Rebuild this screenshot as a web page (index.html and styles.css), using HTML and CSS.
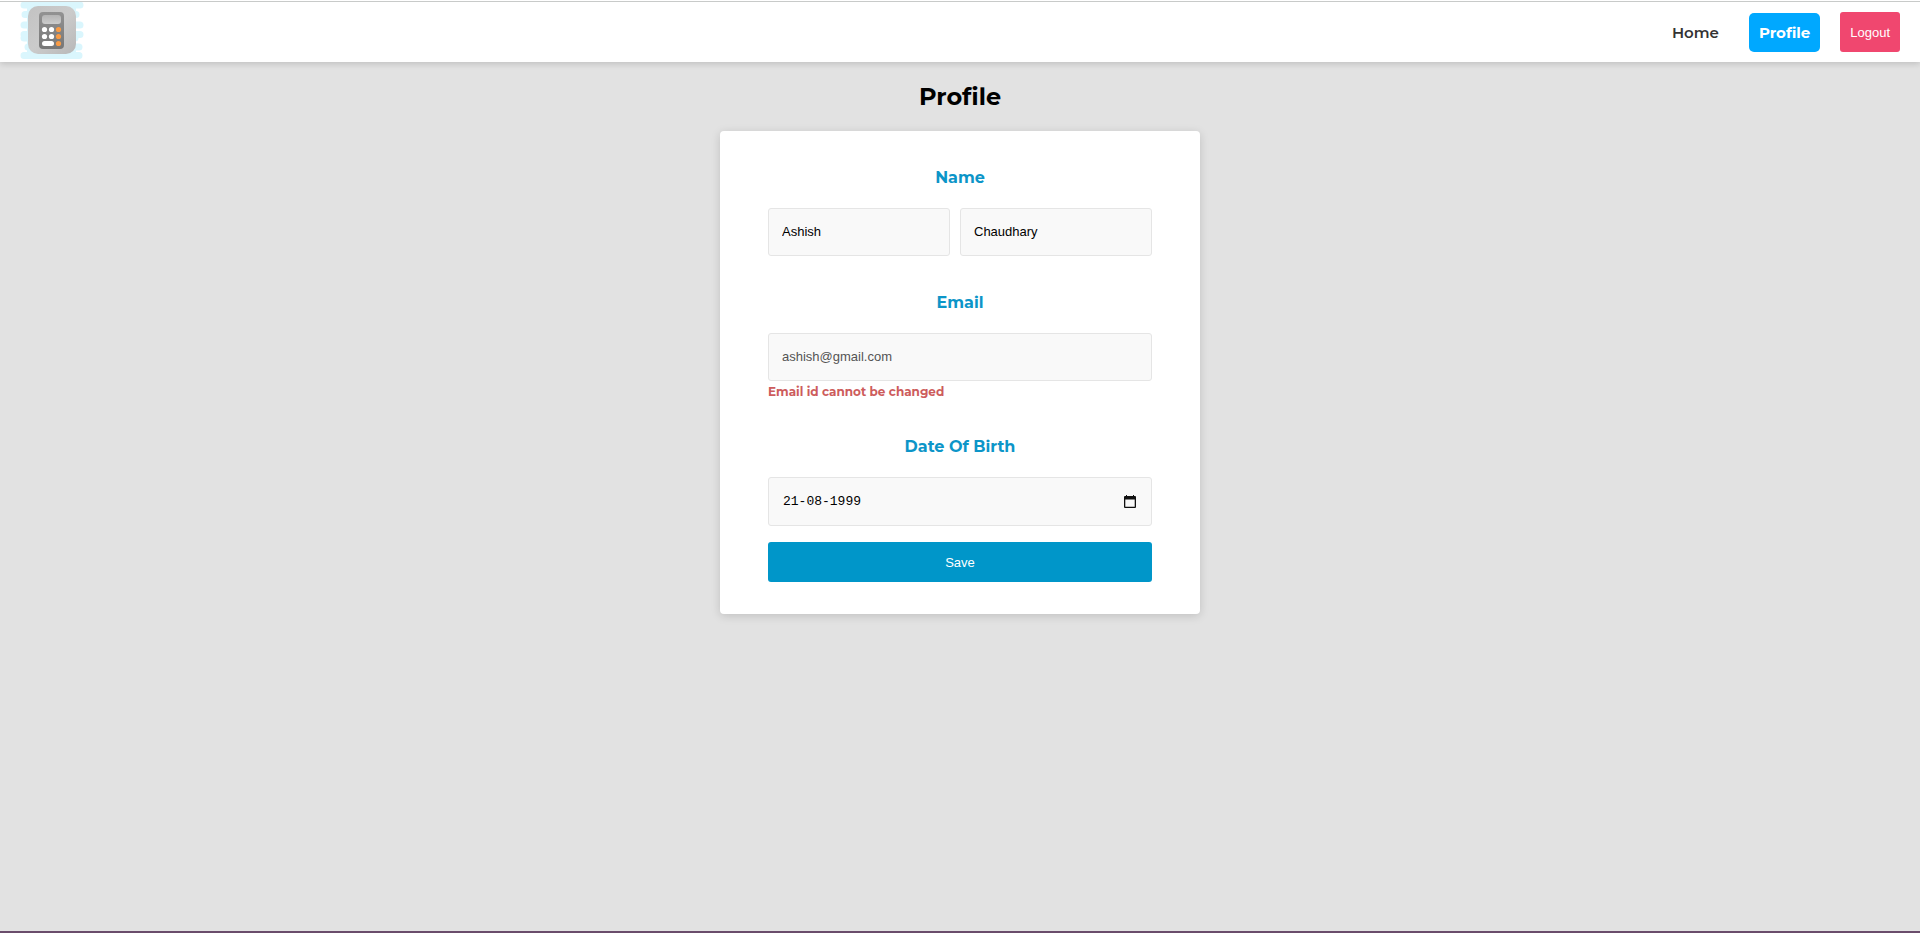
FILE: index.html
```html
<!DOCTYPE html>
<html lang="en">
<head>
<meta charset="utf-8">
<title>Profile</title>
<meta name="viewport" content="width=device-width, initial-scale=1">
<link rel="stylesheet" href="styles.css">
</head>
<body class="page">
<header class="navbar">
  <a class="logo" href="#" aria-label="Calculator home">
    <svg class="logo-icon" viewBox="0 0 64 60" aria-hidden="true">
      <defs>
        <linearGradient id="tile" x1="0" y1="0" x2="1" y2="1"><stop offset="0" stop-color="#c2c2c2"/><stop offset=".5" stop-color="#cbcbcb"/><stop offset="1" stop-color="#b8b8b8"/></linearGradient>
        <linearGradient id="case" x1="0" y1="0" x2="0" y2="1"><stop offset="0" stop-color="#929292"/><stop offset="1" stop-color="#777"/></linearGradient>
        <linearGradient id="screen" x1="0" y1="0" x2="0" y2="1"><stop offset="0" stop-color="#b5b5b5"/><stop offset="1" stop-color="#ccc"/></linearGradient>
      </defs>
      <g stroke="#daf6fd" stroke-width="7" stroke-linecap="round">
        <path d="M4 3H60M5 12.500H56M4 23H60M4 32.500H60M4 36H55M8 45H59M4 53.500H59"/>
      </g>
      <path fill="#daf6fd" d="M7 2h49v52H7z"/>
      <rect x="8" y="4" width="48" height="48" rx="10" fill="url(#tile)"/>
      <rect x="19" y="10" width="25" height="37" rx="4" fill="url(#case)"/>
      <rect x="22" y="13" width="19" height="9" rx="3" fill="url(#screen)"/>
      <g fill="#fff"><circle cx="24.500" cy="27.500" r="2.600"/><circle cx="31.500" cy="27.500" r="2.600"/><circle cx="24.500" cy="34.500" r="2.600"/><circle cx="31.500" cy="34.500" r="2.600"/><rect x="22" y="39" width="12" height="5" rx="2.500"/></g>
      <g fill="#f99b45"><circle cx="38.500" cy="27.500" r="2.600"/><circle cx="38.500" cy="34.500" r="2.600"/><circle cx="38.500" cy="41.500" r="2.600"/></g>
    </svg>
  </a>
  <nav class="nav-links">
    <a class="nav-link" href="#">Home</a>
    <a class="nav-link nav-link-active" href="#" aria-current="page">Profile</a>
    <button class="logout" type="button">Logout</button>
  </nav>
</header>
<main class="content">
  <h1 class="title">Profile</h1>
  <form class="card">
    <label class="label" for="first-name">Name</label>
    <div class="name-row">
      <input class="field" id="first-name" type="text" value="Ashish">
      <input class="field" type="text" aria-label="Last name" value="Chaudhary">
    </div>
    <label class="label" for="email">Email</label>
    <input class="field field-disabled" id="email" type="email" value="ashish@gmail.com" aria-describedby="email-note" disabled>
    <p class="note" id="email-note">Email id cannot be changed</p>
    <label class="label" for="dob">Date Of Birth</label>
    <div class="date-field">
      <input class="date-input" id="dob" type="text" value="21-08-1999">
      <button class="date-button" type="button" aria-label="Choose date">
        <svg class="date-icon" viewBox="0 0 12 13" aria-hidden="true"><path fill="#111" d="M1 1H2V0H3V1H9V0H10V1H11Q12 1 12 2V12Q12 13 11 13H1Q0 13 0 12V2Q0 1 1 1ZM1.300 4.500V11.700H10.700V4.500Z" fill-rule="evenodd"/></svg>
      </button>
    </div>
    <button class="save" type="submit">Save</button>
  </form>
</main>
<footer class="page-end"></footer>
</body>
</html>
```
FILE: styles.css
```css
* { box-sizing: border-box; }

.page {
  display: flex;
  flex-direction: column;
  min-height: 100vh;
  margin: 0;
  border-top: 1px solid #fff;
  background: #e2e2e2;
  color: #000;
  font-family: Montserrat, Inter, sans-serif;
}

.navbar {
  display: flex;
  align-items: center;
  justify-content: space-between;
  padding: 0 20px;
  border-top: 1px solid #c8cac9;
  background: #fff;
  box-shadow: 0 2px 6px rgba(0, 0, 0, 0.15);
}

.logo { display: block; }
.logo-icon { display: block; width: 64px; height: 60px; }

.nav-links { display: flex; align-items: center; gap: 20px; }

.nav-link {
  padding: 0 10px;
  border-radius: 5px;
  color: #333;
  font-size: 15px;
  font-weight: 600;
  line-height: 39px;
  text-decoration: none;
}

.nav-link-active { background: #00a8ff; color: #fff; font-weight: 700; }

.logout,
.save {
  height: 40px;
  padding: 0 10px;
  border: 0;
  border-radius: 3px;
  color: #fff;
  font-family: "Liberation Sans", Arial, sans-serif;
  font-size: 13px;
}

.logout { background: #f0476f; }

.content { flex: 1; padding: 0 20px; }

.title {
  margin: 0;
  padding: 20px 0;
  font-size: 24px;
  font-weight: 700;
  line-height: 29px;
  text-align: center;
}

.card {
  max-width: 480px;
  margin: 0 auto;
  padding: 0 48px 32px;
  border-radius: 4px;
  background: #fff;
  box-shadow: 0 2px 10px rgba(0, 0, 0, 0.15);
}

.label {
  display: block;
  padding: 37px 0 20px;
  color: #0c95c8;
  font-size: 16px;
  font-weight: 700;
  line-height: 20px;
  text-align: center;
}

.name-row { display: grid; grid-template-columns: 182fr 192fr; gap: 10px; }

.field,
.date-field {
  width: 100%;
  height: 48px;
  border: 1px solid #e5e5e5;
  border-radius: 3px;
  background: #f9f9f9;
}

.field {
  min-width: 0;
  padding: 0 13px 2px;
  color: #000;
  font-family: "Liberation Sans", Arial, sans-serif;
  font-size: 13px;
}

.field-disabled { color: #545454; }

.note {
  margin: 0;
  padding-top: 3px;
  color: #cd5c5c;
  font-size: 12px;
  font-weight: 700;
  line-height: 16px;
}

.date-field {
  display: flex;
  align-items: center;
  height: 49px;
  padding: 0 15px 0 14px;
}

.date-input {
  flex: 1;
  min-width: 0;
  padding: 0;
  border: 0;
  background: transparent;
  color: #000;
  font-family: "Liberation Mono", monospace;
  font-size: 13px;
}

.date-button { padding: 0; border: 0; background: transparent; }
.date-icon { display: block; width: 12px; height: 13px; }

.save { width: 100%; margin-top: 16px; background: #0096c9; }

.page-end { height: 2px; background: #6a4c6b; }
```
